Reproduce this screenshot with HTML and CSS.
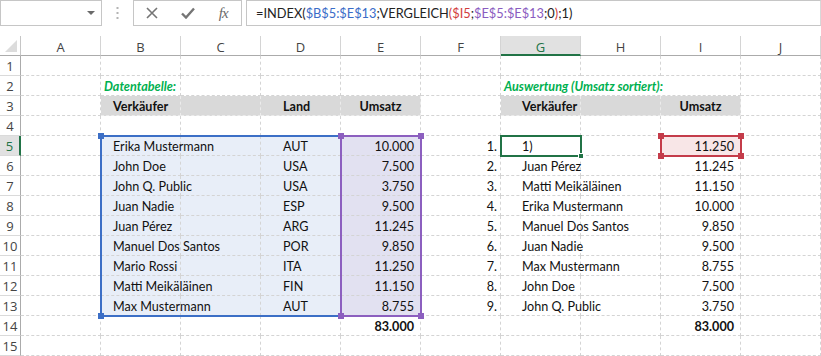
FILE: index.html
```html
<!DOCTYPE html>
<html lang="de">
<head>
  <meta charset="UTF-8">
  <title>INDEX / VERGLEICH</title>
  <link rel="stylesheet" href="styles.css">
</head>
<body>
  <div class="toolbar">
    <div class="namebox"><span class="caret"></span></div>
    <div class="grip">
      <svg width="3" height="13" viewBox="0 0 3 13"><rect x="0.5" y="0" width="2" height="2" fill="#b4b4b4"/><rect x="0.5" y="5" width="2" height="2" fill="#b4b4b4"/><rect x="0.5" y="10" width="2" height="2" fill="#b4b4b4"/></svg>
    </div>
    <div class="fbuttons">
      <span class="fbtn"><svg width="12" height="12" viewBox="0 0 12 12"><path d="M1 1 L11 11 M11 1 L1 11" stroke="#757575" stroke-width="1.6" fill="none"/></svg></span>
      <span class="fbtn"><svg width="14" height="12" viewBox="0 0 14 12"><path d="M1 6.5 L5 10.5 L13 1.5" stroke="#757575" stroke-width="2.4" fill="none"/></svg></span>
      <span class="fbtn fx">fx</span>
    </div>
    <div class="formula">=INDEX(<span class="ref-b">$B$5:$E$13</span>;VERGLEICH<span class="ref-r">(</span><span class="ref-r">$I5</span>;<span class="ref-p">$E$5:$E$13</span>;0<span class="ref-r">)</span>;1)</div>
  </div>

  <div class="sheet">
    <div class="cells">
      <!-- column heads -->
      <div class="corner"><span class="tri"></span></div>
      <div class="ch">A</div><div class="ch">B</div><div class="ch">C</div><div class="ch">D</div><div class="ch">E</div>
      <div class="ch">F</div><div class="ch active-col">G</div><div class="ch">H</div><div class="ch">I</div><div class="ch">J</div>

      <!-- 1 -->
      <div class="rh">1</div>
      <div class="cell"></div><div class="cell"></div><div class="cell"></div><div class="cell"></div><div class="cell"></div>
      <div class="cell"></div><div class="cell"></div><div class="cell"></div><div class="cell"></div><div class="cell"></div>

      <!-- 2 -->
      <div class="rh">2</div>
      <div class="cell"></div>
      <div class="cell label">Datentabelle:</div>
      <div class="cell"></div><div class="cell"></div><div class="cell"></div><div class="cell"></div>
      <div class="cell label span3">Auswertung (Umsatz sortiert):</div>
      <div class="cell"></div>

      <!-- 3 -->
      <div class="rh">3</div>
      <div class="cell"></div>
      <div class="cell hd ind">Verkäufer</div>
      <div class="cell hd"></div>
      <div class="cell hd ind-d">Land</div>
      <div class="cell hd center">Umsatz</div>
      <div class="cell"></div>
      <div class="cell hd ind-g">Verkäufer</div>
      <div class="cell hd"></div>
      <div class="cell hd center">Umsatz</div>
      <div class="cell"></div>

      <!-- 4 -->
      <div class="rh">4</div>
      <div class="cell"></div><div class="cell"></div><div class="cell"></div><div class="cell"></div><div class="cell"></div>
      <div class="cell"></div><div class="cell"></div><div class="cell"></div><div class="cell"></div><div class="cell"></div>

      <!-- 5 -->
      <div class="rh active-row">5</div>
      <div class="cell"></div>
      <div class="cell bl ind">Erika Mustermann</div><div class="cell bl"></div><div class="cell bl ind-d">AUT</div>
      <div class="cell pu num">10.000</div>
      <div class="cell num nr">1.</div>
      <div class="cell ind-g">1)</div><div class="cell"></div>
      <div class="cell pk num">11.250</div>
      <div class="cell"></div>

      <!-- 6 -->
      <div class="rh">6</div>
      <div class="cell"></div>
      <div class="cell bl ind">John Doe</div><div class="cell bl"></div><div class="cell bl ind-d">USA</div>
      <div class="cell pu num">7.500</div>
      <div class="cell num nr">2.</div>
      <div class="cell ind-g">Juan Pérez</div><div class="cell"></div>
      <div class="cell num">11.245</div>
      <div class="cell"></div>

      <!-- 7 -->
      <div class="rh">7</div>
      <div class="cell"></div>
      <div class="cell bl ind">John Q. Public</div><div class="cell bl"></div><div class="cell bl ind-d">USA</div>
      <div class="cell pu num">3.750</div>
      <div class="cell num nr">3.</div>
      <div class="cell ind-g">Matti Meikäläinen</div><div class="cell"></div>
      <div class="cell num">11.150</div>
      <div class="cell"></div>

      <!-- 8 -->
      <div class="rh">8</div>
      <div class="cell"></div>
      <div class="cell bl ind">Juan Nadie</div><div class="cell bl"></div><div class="cell bl ind-d">ESP</div>
      <div class="cell pu num">9.500</div>
      <div class="cell num nr">4.</div>
      <div class="cell ind-g">Erika Mustermann</div><div class="cell"></div>
      <div class="cell num">10.000</div>
      <div class="cell"></div>

      <!-- 9 -->
      <div class="rh">9</div>
      <div class="cell"></div>
      <div class="cell bl ind">Juan Pérez</div><div class="cell bl"></div><div class="cell bl ind-d">ARG</div>
      <div class="cell pu num">11.245</div>
      <div class="cell num nr">5.</div>
      <div class="cell ind-g">Manuel Dos Santos</div><div class="cell"></div>
      <div class="cell num">9.850</div>
      <div class="cell"></div>

      <!-- 10 -->
      <div class="rh">10</div>
      <div class="cell"></div>
      <div class="cell bl ind">Manuel Dos Santos</div><div class="cell bl"></div><div class="cell bl ind-d">POR</div>
      <div class="cell pu num">9.850</div>
      <div class="cell num nr">6.</div>
      <div class="cell ind-g">Juan Nadie</div><div class="cell"></div>
      <div class="cell num">9.500</div>
      <div class="cell"></div>

      <!-- 11 -->
      <div class="rh">11</div>
      <div class="cell"></div>
      <div class="cell bl ind">Mario Rossi</div><div class="cell bl"></div><div class="cell bl ind-d">ITA</div>
      <div class="cell pu num">11.250</div>
      <div class="cell num nr">7.</div>
      <div class="cell ind-g">Max Mustermann</div><div class="cell"></div>
      <div class="cell num">8.755</div>
      <div class="cell"></div>

      <!-- 12 -->
      <div class="rh">12</div>
      <div class="cell"></div>
      <div class="cell bl ind">Matti Meikäläinen</div><div class="cell bl"></div><div class="cell bl ind-d">FIN</div>
      <div class="cell pu num">11.150</div>
      <div class="cell num nr">8.</div>
      <div class="cell ind-g">John Doe</div><div class="cell"></div>
      <div class="cell num">7.500</div>
      <div class="cell"></div>

      <!-- 13 -->
      <div class="rh">13</div>
      <div class="cell"></div>
      <div class="cell bl ind">Max Mustermann</div><div class="cell bl"></div><div class="cell bl ind-d">AUT</div>
      <div class="cell pu num">8.755</div>
      <div class="cell num nr">9.</div>
      <div class="cell ind-g">John Q. Public</div><div class="cell"></div>
      <div class="cell num">3.750</div>
      <div class="cell"></div>

      <!-- 14 -->
      <div class="rh">14</div>
      <div class="cell"></div><div class="cell"></div><div class="cell"></div><div class="cell"></div>
      <div class="cell num bold">83.000</div>
      <div class="cell"></div><div class="cell"></div><div class="cell"></div>
      <div class="cell num bold">83.000</div>
      <div class="cell"></div>

      <!-- 15 -->
      <div class="rh">15</div>
      <div class="cell"></div><div class="cell"></div><div class="cell"></div><div class="cell"></div><div class="cell"></div>
      <div class="cell"></div><div class="cell"></div><div class="cell"></div><div class="cell"></div><div class="cell"></div>
    </div>

    <!-- range highlights drawn over the cells -->
    <div class="marks">
      <div class="range range-blue">
        <span class="knob tl"></span><span class="knob bl-k"></span>
      </div>
      <div class="range range-purple">
        <span class="knob tl"></span><span class="knob tr"></span><span class="knob bl-k"></span><span class="knob br"></span>
      </div>
      <div class="range range-red">
        <span class="knob tl"></span><span class="knob tr"></span><span class="knob bl-k"></span><span class="knob br"></span>
      </div>
      <div class="range range-sel">
        <span class="fill-handle"></span>
      </div>
    </div>
  </div>
</body>
</html>
```

FILE: styles.css
```css
*{margin:0;padding:0;box-sizing:border-box;}
html,body{width:821px;height:356px;overflow:hidden;background:#fff;}
body{font-family:"Lato","Liberation Sans",sans-serif;color:#000;}

/* formula bar */
.toolbar{display:flex;height:26px;}
.namebox{width:102px;height:26px;border:1px solid #c6c6c6;position:relative;}
.caret{position:absolute;right:6px;top:10px;width:0;height:0;border-left:4px solid transparent;border-right:4px solid transparent;border-top:4px solid #6a6a6a;}
.grip{width:31px;display:flex;justify-content:center;align-items:center;}
.fbuttons{width:109px;height:26px;border:1px solid #c6c6c6;display:flex;margin-right:4px;}
.fbtn{width:36px;display:flex;justify-content:center;align-items:center;}
.fx{font-family:"Liberation Serif",serif;font-style:italic;font-size:15px;color:#6a6a6a;letter-spacing:-1px;}
.formula{flex:1;height:26px;border:1px solid #c6c6c6;border-right-color:#d8d8d8;padding-left:9px;font-size:12.8px;line-height:24px;color:#222;white-space:nowrap;}
.ref-b{color:#3a6cc8;}
.ref-r{color:#d23c3c;}
.ref-p{color:#8a5cbf;}

/* sheet */
.sheet{display:grid;margin-top:10px;}
.cells,.marks{grid-area:1/1;display:grid;grid-template-columns:21px repeat(10,80px);grid-template-rows:20px repeat(15,20px);}
.marks{pointer-events:none;z-index:2;}

.corner{border-right:1px solid #c6c6c6;border-bottom:1px solid #ababab;position:relative;}
.tri{position:absolute;right:3px;bottom:3px;width:0;height:0;border-left:12px solid transparent;border-bottom:12px solid #dcdcdc;}
.ch{border-bottom:1px solid #ababab;border-right:1px solid #d4d4d4;font-family:"Open Sans","Liberation Sans",sans-serif;font-size:13px;color:#444;text-align:center;line-height:20px;padding-top:1px;}
.ch.active-col{background:#e1e1e1;border-bottom:2px solid #217346;color:#217346;}
.rh{border-right:1px solid #ababab;border-bottom:1px solid #dadada;font-family:"Open Sans","Liberation Sans",sans-serif;font-size:13px;color:#444;text-align:center;line-height:20px;}
.rh.active-row{background:#e1e1e1;border-right:2px solid #217346;color:#217346;}

.cell{border-right:1px dashed #d4d4d4;border-bottom:1px dashed #d4d4d4;font-size:12.6px;line-height:21px;padding:0 3px;white-space:nowrap;overflow:visible;color:#111;}
.span3{grid-column:span 3;}
.label{color:#00b050;font-weight:bold;font-style:italic;padding-left:3px;z-index:1;}
.hd{background:#d9d9d9;font-weight:bold;border-color:#ececec;}
.center{text-align:center;}
.ind{padding-left:12px;z-index:1;}
.ind-d{padding-left:22px;}
.ind-g{padding-left:21px;z-index:1;}
.num{text-align:right;padding-right:6px;}
.nr{padding-right:3px;}
.bold{font-weight:bold;}
.bl{background:#e8eef8;}
.pu{background:#e2e1f1;}
.pk{background:#f8e6e7;}

/* highlights */
.range{position:relative;border:2px solid;margin:-1px;}
.range-blue{grid-column:3/6;grid-row:6/15;border-color:#3c6fc6;}
.range-purple{grid-column:6/7;grid-row:6/15;border-color:#8c5fbf;}
.range-red{grid-column:10/11;grid-row:6/7;border-color:#c43c4a;}
.range-sel{grid-column:8/9;grid-row:6/7;border-color:#217346;}
.knob{position:absolute;width:6px;height:6px;}
.range-blue .knob{background:#3c6fc6;}
.range-purple .knob{background:#8c5fbf;}
.range-red .knob{background:#c43c4a;}
.tl{left:-4px;top:-4px;}
.tr{right:-4px;top:-4px;}
.bl-k{left:-4px;bottom:-4px;}
.br{right:-4px;bottom:-4px;}
.fill-handle{position:absolute;right:-4px;bottom:-4px;width:6px;height:6px;background:#217346;border:1px solid #fff;}
```
